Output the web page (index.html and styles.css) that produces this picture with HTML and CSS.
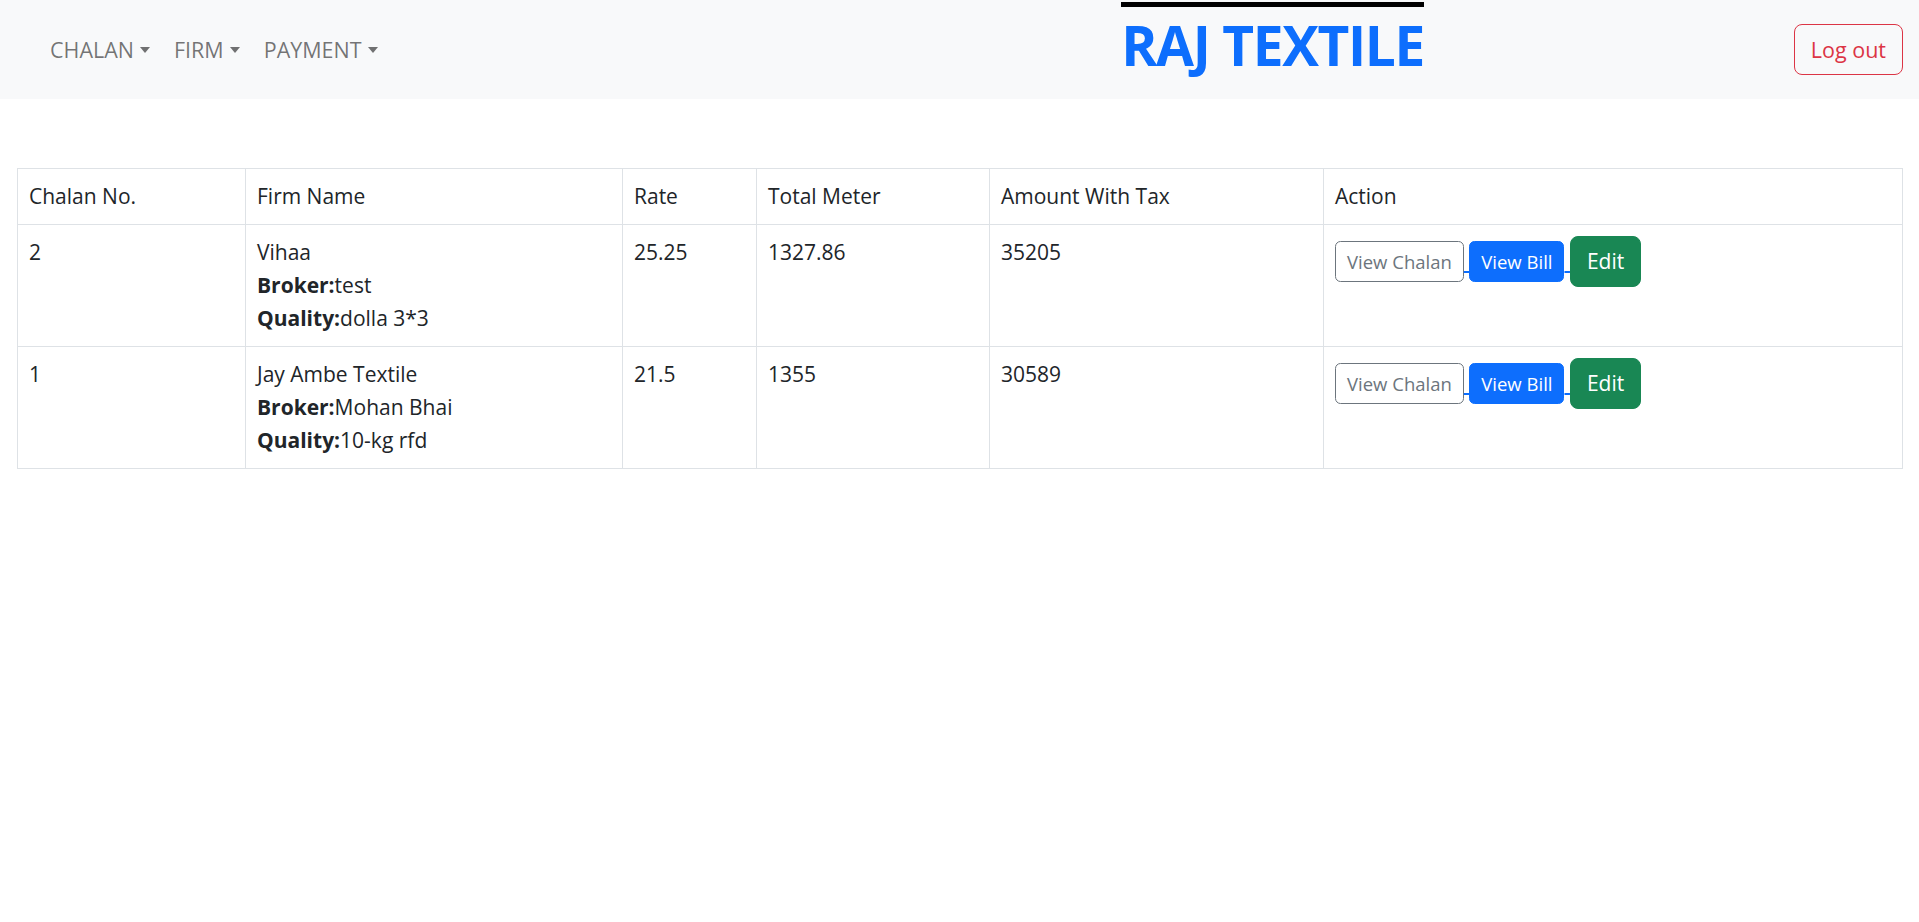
FILE: index.html
```html
<!DOCTYPE html>
<html lang="en">
<head>
<meta charset="utf-8">
<title>Raj Textile</title>
<link rel="stylesheet" href="styles.css">
</head>
<body>
<nav class="navbar">
  <ul class="nav">
    <li><a class="nav-link dropdown-toggle" href="#">CHALAN</a></li>
    <li><a class="nav-link dropdown-toggle" href="#">FIRM</a></li>
    <li><a class="nav-link dropdown-toggle" href="#">PAYMENT</a></li>
  </ul>
  <h1 class="brand">RAJ TEXTILE</h1>
  <button class="btn btn-outline-danger">Log out</button>
</nav>

<main class="content">
  <table class="table">
    <colgroup>
      <col class="col-no">
      <col class="col-firm">
      <col class="col-rate">
      <col class="col-meter">
      <col class="col-amount">
      <col class="col-action">
    </colgroup>
    <thead>
      <tr>
        <th>Chalan No.</th>
        <th>Firm Name</th>
        <th>Rate</th>
        <th>Total Meter</th>
        <th>Amount With Tax</th>
        <th>Action</th>
      </tr>
    </thead>
    <tbody>
      <tr>
        <td>2</td>
        <td>Vihaa<br><b>Broker:</b>test<br><b>Quality:</b>dolla 3*3</td>
        <td>25.25</td>
        <td>1327.86</td>
        <td>35205</td>
        <td><a class="act" href="#"><span class="btn btn-sm btn-outline-secondary">View Chalan</span> <span class="btn btn-sm btn-primary">View Bill</span> <span class="btn btn-success">Edit</span></a></td>
      </tr>
      <tr>
        <td>1</td>
        <td>Jay Ambe Textile<br><b>Broker:</b>Mohan Bhai<br><b>Quality:</b>10-kg rfd</td>
        <td>21.5</td>
        <td>1355</td>
        <td>30589</td>
        <td><a class="act" href="#"><span class="btn btn-sm btn-outline-secondary">View Chalan</span> <span class="btn btn-sm btn-primary">View Bill</span> <span class="btn btn-success">Edit</span></a></td>
      </tr>
    </tbody>
  </table>
</main>
</body>
</html>
```

FILE: styles.css
```css
* { box-sizing: border-box; }

body {
  margin: 0;
  font-family: "Open Sans", "Noto Sans", sans-serif;
  font-size: 21px;
  line-height: 33px;
  color: #212529;
  background: #fff;
}

/* ---------- navbar ---------- */
.navbar {
  display: flex;
  align-items: center;
  height: 99px;
  background: #f8f9fa;
  padding: 0 16px 0 38px;
}

.nav {
  display: flex;
  list-style: none;
  margin: 0;
  padding: 0;
}

.nav-link {
  display: block;
  padding: 0 12px;
  font-size: 21.5px;
  color: rgba(0, 0, 0, 0.55);
  text-decoration: none;
}

.dropdown-toggle::after {
  content: "";
  display: inline-block;
  margin-left: 6px;
  vertical-align: 5px;
  border-top: 6px solid;
  border-left: 5.5px solid transparent;
  border-right: 5.5px solid transparent;
}

.brand {
  align-self: flex-start;
  margin: 2px 370px 0 auto;
  padding-top: 5px;
  border-top: 5px solid #000;
  font-size: 55px;
  font-weight: 700;
  letter-spacing: -1.4px;
  line-height: 66px;
  color: #0d6efd;
}

/* ---------- buttons ---------- */
.btn {
  display: inline-block;
  font-family: inherit;
  font-size: 21px;
  line-height: 33px;
  padding: 8px 16px;
  border: 1px solid transparent;
  border-radius: 8px;
  text-align: center;
  vertical-align: middle;
  cursor: pointer;
  background: transparent;
}

.btn-sm {
  font-size: 18.5px;
  line-height: 29px;
  padding: 5px 11px;
  border-radius: 5.5px;
}

.btn-outline-danger {
  font-size: 21.5px;
  color: #dc3545;
  border-color: #dc3545;
}

.btn-outline-secondary {
  color: #6c757d;
  border-color: #6c757d;
  background: #fff;
}

.btn-primary {
  color: #fff;
  background: #0d6efd;
  border-color: #0d6efd;
}

.btn-success {
  color: #fff;
  background: #198754;
  border-color: #198754;
}

.act {
  color: #0d6efd;
  text-decoration: underline;
}

.act .btn { vertical-align: baseline; }

/* ---------- table ---------- */
.content {
  padding: 69px 16px 0 17px;
}

.table {
  width: 100%;
  border-collapse: collapse;
  table-layout: fixed;
}

.table th,
.table td {
  border: 1px solid #dee2e6;
  padding: 11px;
  text-align: left;
  vertical-align: top;
  font-weight: 400;
}

.table b { font-weight: 700; }

.col-no { width: 228px; }
.col-firm { width: 377px; }
.col-rate { width: 134px; }
.col-meter { width: 233px; }
.col-amount { width: 334px; }
```
